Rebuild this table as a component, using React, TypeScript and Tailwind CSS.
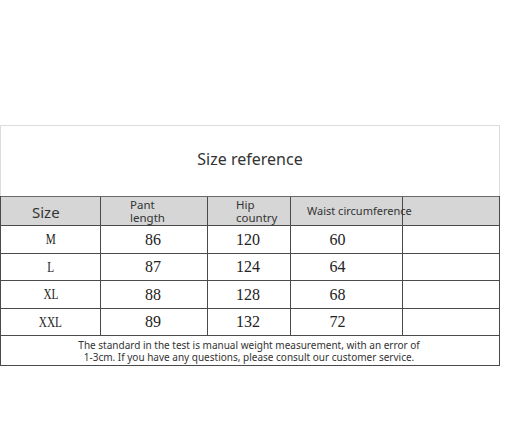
export default function App() {
  const rows = [
    { size: "M", pant: "86", hip: "120", waist: "60" },
    { size: "L", pant: "87", hip: "124", waist: "64" },
    { size: "XL", pant: "88", hip: "128", waist: "68" },
    { size: "XXL", pant: "89", hip: "132", waist: "72" },
  ]
  const cols = "grid grid-cols-[100px_107px_83px_112px_97px]"
  const serif = { fontFamily: '"Liberation Serif", "DejaVu Serif", serif' }

  return (
    <div className="w-[505px] h-[446px] bg-white pt-[125px]" style={{ fontFamily: '"Noto Sans", "Open Sans", sans-serif' }}>
      <div className="w-[500px]">
        {/* title */}
        <div className="h-[71px] border-t border-l border-r border-[#dcdcdc] flex items-center justify-center text-[16px] text-[#333] pb-[4px]">
          Size reference
        </div>

        <div className="border-l border-r border-b border-[#4a4a4a]">
          {/* header */}
          <div className={`${cols} h-[29px] bg-[#d6d6d6] border-t border-[#6a6a6a] text-[#333]`}>
            <div className="border-r border-[#4a4a4a] flex items-center pl-[31px] text-[15px] pt-[3px]">Size</div>
            <div className="border-r border-[#4a4a4a] flex flex-col justify-center pl-[29px] text-[11.5px] leading-[13px]">
              <span>Pant</span>
              <span>length</span>
            </div>
            <div className="border-r border-[#4a4a4a] flex flex-col justify-center pl-[28px] text-[11.5px] leading-[13px]">
              <span>Hip</span>
              <span>country</span>
            </div>
            <div className="border-r border-[#4a4a4a] flex items-center pl-[16px] text-[11px] whitespace-nowrap overflow-visible relative z-10">
              Waist circumference
            </div>
            <div />
          </div>

          {rows.map((r, i) => (
            <div
              key={r.size}
              className={`${cols} ${i % 2 === 0 ? "h-[28px]" : "h-[27px]"} border-t border-[#4a4a4a] text-[#222]`}
              style={serif}
            >
              <div className="border-r border-[#4a4a4a] flex items-center justify-center text-[15px]">
                <span className="inline-block scale-x-75">{r.size}</span>
              </div>
              <div className="border-r border-[#4a4a4a] flex items-center justify-center text-[16px] pr-[2px]">{r.pant}</div>
              <div className="border-r border-[#4a4a4a] flex items-center justify-center text-[16px] pr-[2px]">{r.hip}</div>
              <div className="border-r border-[#4a4a4a] flex items-center justify-center text-[16px] pr-[18px]">{r.waist}</div>
              <div />
            </div>
          ))}

          {/* footer note */}
          <div className="h-[30px] border-t border-[#4a4a4a] flex flex-col items-center justify-center text-[10px] leading-[12px] text-[#333] pr-[2px]">
            <span>The standard in the test is manual weight measurement, with an error of</span>
            <span>1-3cm. If you have any questions, please consult our customer service.</span>
          </div>
        </div>
      </div>
    </div>
  )
}
